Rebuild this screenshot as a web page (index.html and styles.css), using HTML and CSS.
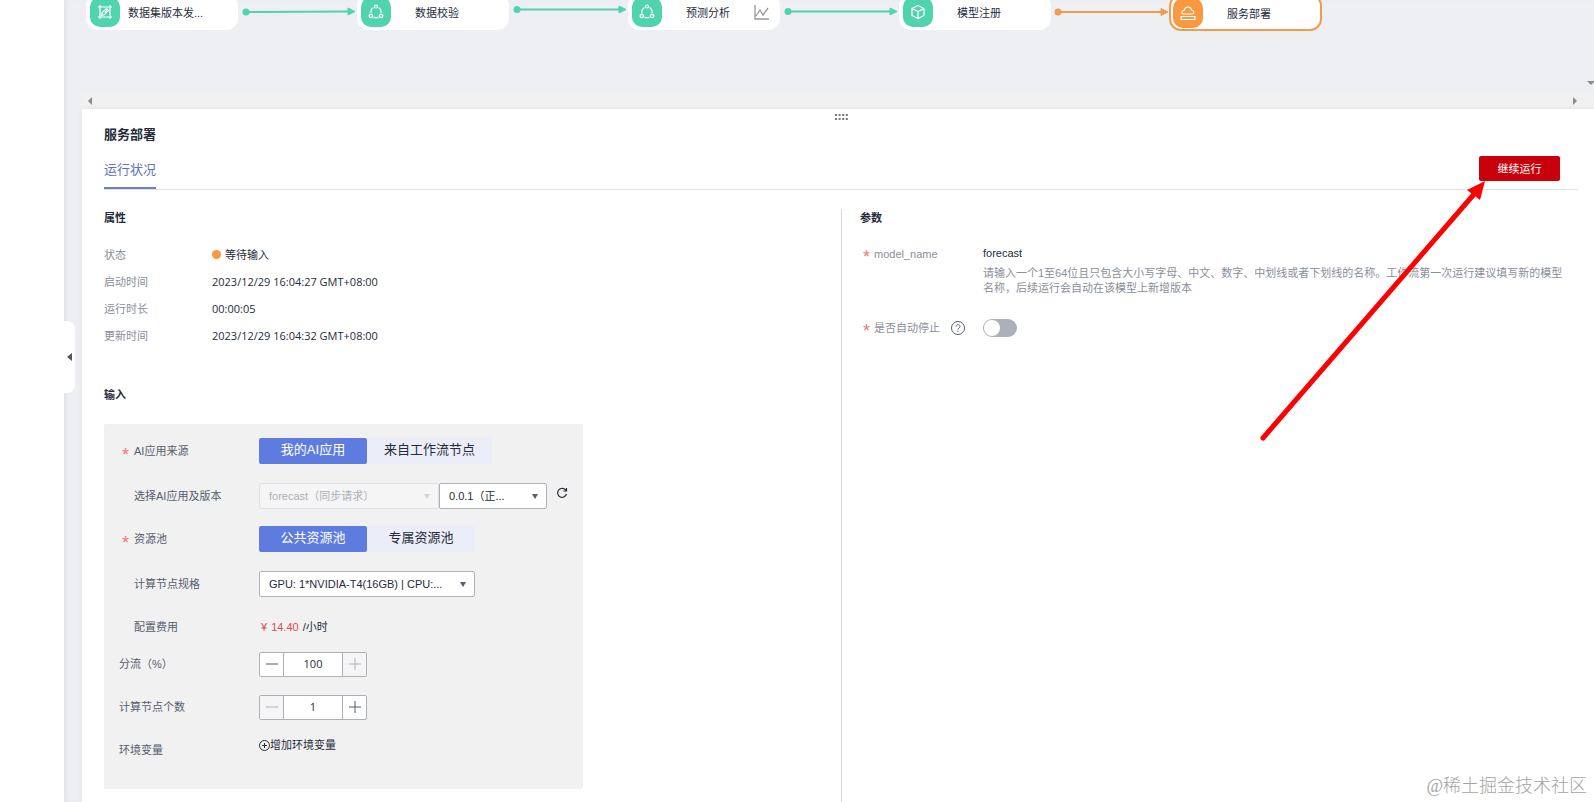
FILE: index.html
```html
<!DOCTYPE html>
<html lang="zh-CN">
<head>
  <meta charset="UTF-8" />
  <meta name="viewport" content="width=device-width, initial-scale=1.0"/>
  <title>服务部署</title>
  <link rel="stylesheet" href="styles.css">
</head>
<body>
  <div class="side">
    <button class="collapse" aria-label="收起"></button>
  </div>

  <main class="main">
    <!-- 工作流画布 -->
    <section class="canvas">
      <svg class="links" width="1200" height="40">
        <g fill="#50d4ab" stroke="#50d4ab" stroke-width="2">
          <path d="M182 12 L284 11.5"/><circle cx="182" cy="12" r="2.5"/><path d="M284 8 L291 11.5 L284 15z" stroke-width="1"/>
          <path d="M453 9.500 H555"/><circle cx="453" cy="9.500" r="2.5"/><path d="M555 6 L562 9.500 L555 13z" stroke-width="1"/>
          <path d="M724 11.500 H826"/><circle cx="724" cy="11.500" r="2.5"/><path d="M826 8 L833 11.500 L826 15z" stroke-width="1"/>
        </g>
        <g fill="#f29b4b" stroke="#f29b4b" stroke-width="2">
          <path d="M994 12 H1097"/><circle cx="994" cy="12" r="2.5"/><path d="M1097 8.500 L1104 12 L1097 15.500z" stroke-width="1"/>
        </g>
      </svg>

      <div class="node node-1">
        <span class="node-icon">
          <svg width="16" height="16" viewBox="0 0 16 16"><path d="M3 1v14M13 1v14M1 3h14M1 13h14M4.500 11.500l.7-3L9.500 4.500l2 2-4.300 4.300zM8 8.500l2-2"/></svg>
        </span>
        <span class="node-name">数据集版本发...</span>
      </div>
      <div class="node node-2">
        <span class="node-icon">
          <svg width="16" height="16" viewBox="0 0 16 16"><circle cx="8" cy="2.500" r="1.500"/><circle cx="2.800" cy="12" r="1.700"/><circle cx="13.200" cy="12" r="1.700"/><path d="M5.500 3.500C3 5 2.500 7 3 9.500M10.500 3.500c2.500 1.500 3 3.500 2.500 6M5.500 13c1.500 1 3.500 1 5 0"/></svg>
        </span>
        <span class="node-name">数据校验</span>
      </div>
      <div class="node node-3">
        <span class="node-icon">
          <svg width="16" height="16" viewBox="0 0 16 16"><circle cx="8" cy="2.500" r="1.500"/><circle cx="2.800" cy="12" r="1.700"/><circle cx="13.200" cy="12" r="1.700"/><path d="M5.500 3.500C3 5 2.500 7 3 9.500M10.500 3.500c2.500 1.500 3 3.500 2.500 6M5.500 13c1.500 1 3.500 1 5 0"/></svg>
        </span>
        <span class="node-name">预测分析</span>
        <svg class="chart" width="16" height="16" viewBox="0 0 16 16"><path d="M1 1v14h14M2 12l4-6 3 5 5-7"/></svg>
      </div>
      <div class="node node-4">
        <span class="node-icon">
          <svg width="16" height="16" viewBox="0 0 16 16"><path d="M8 1.500l6 3v7l-6 3-6-3v-7zM2 4.500l6 3 6-3M8 7.500v7"/></svg>
        </span>
        <span class="node-name">模型注册</span>
      </div>
      <div class="node node-5">
        <span class="node-icon">
          <svg width="16" height="16" viewBox="0 0 16 16"><path d="M3.500 9C.8 9 1.300 5.500 4 5.500 5 1 11 1 11.500 5c3 .3 3 4 .8 4zM1 11.500h14v3H1z"/></svg>
        </span>
        <span class="node-name">服务部署</span>
      </div>
      <i class="scroll-down"></i>
    </section>
    <div class="scrollbar"><i class="arrow-left"></i><i class="arrow-right"></i></div>

    <!-- 详情面板 -->
    <section class="panel">
      <div class="grip"><svg width="13" height="6"><path d="M0 1h13M0 5h13" stroke="#777" stroke-width="2" stroke-dasharray="2 1.600"/></svg></div>
      <h1 class="title">服务部署</h1>
      <div class="tabs">
        <a class="tab" href="#">运行状况</a>
        <button class="run">继续运行</button>
      </div>

      <div class="columns">
        <div class="left">
          <h2>属性</h2>
          <dl class="props">
            <dt>状态</dt><dd><i class="dot"></i>等待输入</dd>
            <dt>启动时间</dt><dd>2023/12/29 16:04:27 GMT+08:00</dd>
            <dt>运行时长</dt><dd>00:00:05</dd>
            <dt>更新时间</dt><dd>2023/12/29 16:04:32 GMT+08:00</dd>
          </dl>

          <h2>输入</h2>
          <form class="form">
            <div class="row row-wide">
              <span class="label sub required">AI应用来源</span>
              <button type="button" class="seg active">我的AI应用</button>
              <button type="button" class="seg seg-long">来自工作流节点</button>
            </div>
            <div class="row">
              <label class="label sub" for="app">选择AI应用及版本</label>
              <span class="select disabled select-app"><select id="app" disabled><option>forecast（同步请求）</option></select></span>
              <span class="select select-version"><select aria-label="版本"><option>0.0.1（正...</option></select></span>
              <button type="button" class="refresh" aria-label="刷新">
                <svg width="12" height="12" viewBox="0 0 12 12"><path d="M10 3.500A4.500 4.500 0 1 0 10.500 7M10.500 1v3h-3"/></svg>
              </button>
            </div>
            <div class="row row-wide">
              <span class="label sub required">资源池</span>
              <button type="button" class="seg active">公共资源池</button>
              <button type="button" class="seg">专属资源池</button>
            </div>
            <div class="row">
              <label class="label sub" for="spec">计算节点规格</label>
              <span class="select select-spec"><select id="spec"><option>GPU: 1*NVIDIA-T4(16GB) | CPU:...</option></select></span>
            </div>
            <div class="row row-tight">
              <span class="label sub">配置费用</span>
              <span class="price"><b>¥</b><b>14.40</b><span>/小时</span></span>
            </div>
            <div class="row">
              <label class="label" for="ratio">分流（%）</label>
              <span class="stepper">
                <button type="button" aria-label="减少"><svg width="12" height="12"><path d="M0 6h12"/></svg></button>
                <input id="ratio" type="text" value="100">
                <button type="button" aria-label="增加" disabled><svg width="12" height="12"><path d="M0 6h12M6 0v12"/></svg></button>
              </span>
            </div>
            <div class="row">
              <label class="label" for="count">计算节点个数</label>
              <span class="stepper">
                <button type="button" aria-label="减少" disabled><svg width="12" height="12"><path d="M0 6h12"/></svg></button>
                <input id="count" type="text" value="1">
                <button type="button" aria-label="增加"><svg width="12" height="12"><path d="M0 6h12M6 0v12"/></svg></button>
              </span>
            </div>
            <div class="row row-env">
              <span class="label">环境变量</span>
              <button type="button" class="add"><svg width="11" height="11" viewBox="0 0 11 11"><circle cx="5.500" cy="5.500" r="5"/><path d="M3 5.500h5M5.500 3v5"/></svg>增加环境变量</button>
            </div>
          </form>
        </div>

        <div class="right">
          <h2>参数</h2>
          <div class="param">
            <span class="param-label required">model_name</span>
            <div class="param-value">
              <p class="model">forecast</p>
              <p class="hint">请输入一个1至64位且只包含大小写字母、中文、数字、中划线或者下划线的名称。工作流第一次运行建议填写新的模型名称，后续运行会自动在该模型上新增版本</p>
            </div>
          </div>
          <div class="param">
            <label class="param-label required" for="autostop">是否自动停止
              <svg class="help" width="16" height="16" viewBox="0 0 16 16"><circle cx="8" cy="8" r="6.500"/><path d="M6 6.500c0-2.500 4-2.500 4 0C10 8 8 8 8 9.500M8 10.500v1.300"/></svg>
            </label>
            <input id="autostop" class="switch" type="checkbox">
          </div>
        </div>
      </div>
    </section>
  </main>

  <svg class="pointer" width="240" height="270"><path d="M14 259 L226 14" stroke="#f00" stroke-width="5" stroke-linecap="round"/><path d="M236 2 L218 11 L231 21z" fill="#f00"/></svg>
  <div class="watermark">@稀土掘金技术社区</div>
</body>
</html>
```
FILE: styles.css
```css
* {
  box-sizing: border-box;
}

body {
  margin: 0;
  height: 100vh;
  overflow: hidden;
  display: flex;
  position: relative;
  background: #fff;
  color: #252b3a;
  font-family: "Liberation Sans", "Noto Sans CJK SC", sans-serif;
  font-size: 11px;
  line-height: 16px;
}

button, input, select {
  font: inherit;
  color: inherit;
  margin: 0;
  padding: 0;
  border: 0;
  background: none;
}

svg {
  fill: none;
  flex-shrink: 0;
}

h1, h2, p, dl, dd {
  margin: 0;
}

/* 左侧 */
.side {
  width: 64px;
  flex-shrink: 0;
  position: relative;
}

.collapse {
  position: absolute;
  left: 100%;
  top: 321px;
  z-index: 2;
  width: 11px;
  height: 72px;
  display: flex;
  align-items: center;
  justify-content: center;
  background: #fff;
  border-radius: 0 8px 8px 0;
}

.collapse::before {
  content: "";
  border: 4px solid transparent;
  border-left: 0;
  border-right: 5px solid #555;
}

.main {
  flex: 1;
  min-width: 0;
  display: flex;
  flex-direction: column;
  background: #eeeff3;
  box-shadow: inset 4px 0 4px -2px #dfe1e6;
}

/* 画布 */
.canvas {
  height: 92px;
  flex-shrink: 0;
  position: relative;
  overflow: hidden;
}

.links {
  position: absolute;
  left: 0;
  top: 0;
}

.node {
  position: absolute;
  top: -6px;
  width: 152px;
  height: 36px;
  padding: 3px 4px;
  display: flex;
  align-items: center;
  background: #fff;
  border-radius: 12px;
}

.node-1 { left: 22px; }
.node-2 { left: 293px; }
.node-3 { left: 564px; }
.node-4 { left: 835px; }
.node-5 {
  left: 1105px;
  width: 153px;
  height: 37px;
  padding: 1px 2px;
  border: 2px solid #f29b4b;
}

.node-icon {
  width: 30px;
  height: 30px;
  flex-shrink: 0;
  display: flex;
  align-items: center;
  justify-content: center;
  border-radius: 10px;
  background: #50d4ab;
}

.node-5 .node-icon {
  background: #fa9841;
}

.node-icon svg {
  stroke: #fff;
  stroke-width: 1.2;
}

.node-name {
  margin-left: 24px;
  padding-top: 2px;
}

.node-1 .node-name {
  margin-left: 8px;
}

.chart {
  margin-left: 24px;
  stroke: #999;
  stroke-width: 1.3;
}

.scroll-down {
  position: absolute;
  right: -1px;
  top: 81px;
  border: 4px solid transparent;
  border-bottom: 0;
  border-top-color: #8b8b8b;
}

.scrollbar {
  height: 17px;
  flex-shrink: 0;
  margin-left: 18px;
  padding: 0 17px 0 6px;
  display: flex;
  align-items: center;
  justify-content: space-between;
  background: #f0f0f0;
}

.arrow-left, .arrow-right {
  border: 4px solid transparent;
}

.arrow-left {
  border-left: 0;
  border-right-color: #8b8b8b;
}

.arrow-right {
  border-right: 0;
  border-left-color: #8b8b8b;
}

/* 面板 */
.panel {
  flex: 1;
  min-height: 0;
  margin-left: 18px;
  padding: 0 16px 0 22px;
  display: flex;
  flex-direction: column;
  background: #fff;
  box-shadow: 0 0 4px #dcdee3;
}

.grip {
  height: 16px;
  display: flex;
  justify-content: center;
  align-items: center;
  flex-shrink: 0;
}

.title {
  font-size: 13px;
  line-height: 20px;
}

.tabs {
  height: 45px;
  display: flex;
  justify-content: space-between;
  align-items: flex-end;
  flex-shrink: 0;
  border-bottom: 1px solid #dfe1e6;
}

.tab {
  height: 29px;
  font-size: 13px;
  line-height: 20px;
  color: #5e73c0;
  text-decoration: none;
  border-bottom: 2px solid #6e7fc4;
}

.run {
  width: 81px;
  height: 25px;
  margin: 0 18px 8px 0;
  background: #c7000b;
  color: #fff;
  border-radius: 2px;
}

.columns {
  flex: 1;
  min-height: 0;
  display: flex;
  padding-top: 19px;
}

.left {
  width: 50%;
}

.right {
  width: 50%;
  padding: 0 12px 0 18px;
  border-left: 1px solid #d3d5da;
}

h2 {
  font-size: 11px;
  line-height: 18px;
}

.props {
  display: grid;
  grid-template-columns: 108px 1fr;
  row-gap: 11px;
  margin: 20px 0 42px;
  font-family: "Open Sans", "Noto Sans CJK SC", sans-serif;
}

.props dt {
  color: #8a8e99;
}

.dot {
  display: inline-block;
  width: 9px;
  height: 9px;
  margin-right: 4px;
  border-radius: 50%;
  background: #fa9841;
}

/* 表单 */
.form {
  width: 479px;
  height: 365px;
  margin-top: 20px;
  padding: 14px 15px;
  background: #f1f1f1;
  border-radius: 2px;
}

.row {
  display: flex;
  align-items: center;
  height: 26px;
  margin-bottom: 17px;
}

.row-wide {
  margin-bottom: 19px;
}

.row-tight {
  margin-bottom: 11px;
}

.label {
  width: 140px;
  flex-shrink: 0;
  color: #575d6c;
}

.sub {
  padding-left: 15px;
}

.required {
  position: relative;
}

.required::before {
  content: "*";
  position: absolute;
  left: 3px;
  top: 4px;
  font-size: 18px;
  color: #f07a70;
}

.seg {
  width: 108px;
  height: 26px;
  padding-bottom: 2px;
  font-size: 13px;
  line-height: 20px;
  background: #ebeef8;
  border-radius: 2px;
}

.seg-long {
  width: 125px;
}

.active {
  background: #5e7ce0;
  color: #fff;
}

.select {
  position: relative;
  height: 26px;
}

.select select {
  appearance: none;
  width: 100%;
  height: 100%;
  padding: 0 24px 0 9px;
  background: #fff;
  border: 1px solid #adb0b8;
  border-radius: 2px;
}

.select::after {
  content: "";
  position: absolute;
  right: 9px;
  top: 11px;
  border: 3px solid transparent;
  border-top: 5px solid #575d6c;
  border-bottom: 0;
}

.disabled select {
  background: #f5f5f6;
  border-color: #dfe1e6;
  color: #adb0b8;
  opacity: 1;
}

.disabled::after {
  border-top-color: #d3d5da;
}

.select-app { width: 180px; }
.select-version { width: 108px; }
.select-spec { width: 216px; }

.refresh {
  width: 12px;
  height: 18px;
  margin-left: 9px;
  display: flex;
}

.refresh svg {
  stroke: #252b3a;
  stroke-width: 1.2;
}

.price {
  display: flex;
  gap: 4px;
  padding-left: 2px;
}

.price b {
  font-weight: normal;
  color: #e04a50;
}

.stepper {
  display: flex;
  width: 108px;
  height: 25px;
  background: #fff;
  border: 1px solid #adb0b8;
  border-radius: 2px;
}

.stepper button {
  width: 23px;
  display: flex;
  align-items: center;
  justify-content: center;
}

.stepper button:disabled {
  background: #f5f5f6;
}

.stepper svg {
  stroke: #575d6c;
}

.stepper button:disabled svg {
  stroke: #adb0b8;
}

.stepper input {
  width: 60px;
  text-align: center;
  border: solid #adb0b8;
  border-width: 0 1px;
  font-family: "Open Sans", sans-serif;
}

.add {
  display: flex;
  align-items: center;
  padding-bottom: 10px;
}

.add svg {
  stroke: #252b3a;
}

/* 参数 */
.param {
  display: flex;
  margin-top: 18px;
}

.param + .param {
  margin-top: 23px;
}

.param-label {
  width: 123px;
  flex-shrink: 0;
  padding-left: 14px;
  display: flex;
  align-items: center;
  gap: 10px;
  height: 18px;
  color: #8a8e99;
}

.model {
  padding-bottom: 5px;
}

.hint {
  line-height: 15px;
  color: #8a8e99;
}

.help {
  stroke: #575d6c;
}

.switch {
  appearance: none;
  width: 34px;
  height: 18px;
  padding: 1px;
  background: #adb0b8;
  border-radius: 9px;
}

.switch::before {
  content: "";
  display: block;
  width: 16px;
  height: 16px;
  background: #fff;
  border-radius: 50%;
}

/* 标注箭头与水印 */
.pointer {
  position: absolute;
  right: 105px;
  top: 179px;
}

.watermark {
  position: absolute;
  right: 7px;
  bottom: 4px;
  font-family: "Liberation Serif", "Noto Sans CJK SC", serif;
  font-size: 18px;
  font-weight: 300;
  line-height: 24px;
  color: #a3a3a3;
}
```
